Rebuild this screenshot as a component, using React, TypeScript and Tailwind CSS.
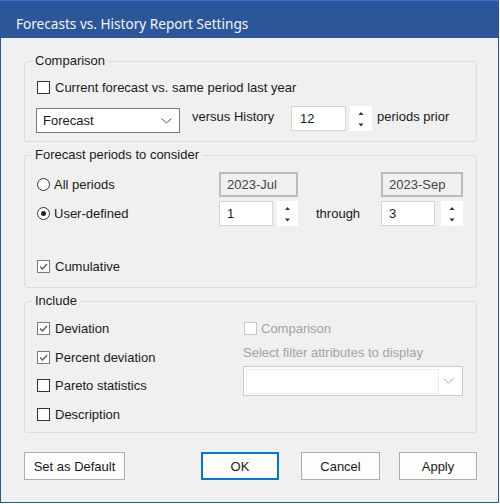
import React from "react";

function Check({ checked = false, disabled = false }: { checked?: boolean; disabled?: boolean }) {
  const cls = disabled
    ? "w-[13px] h-[13px] border border-[#c4c4c4] bg-white flex items-center justify-center shrink-0"
    : checked
    ? "w-[13px] h-[13px] border border-[#7a7a7a] bg-white flex items-center justify-center shrink-0"
    : "w-[13px] h-[13px] border border-[#333333] bg-white flex items-center justify-center shrink-0";
  return (
    <span className={cls}>
      {checked && (
        <svg width="11" height="11" viewBox="0 0 11 11">
          <path d="M2 5.5 L4.5 8 L9 3" stroke="#5a5a5a" strokeWidth="1.3" fill="none" />
        </svg>
      )}
    </span>
  );
}

function Radio({ selected = false }: { selected?: boolean }) {
  return (
    <span className="w-[13px] h-[13px] rounded-full border border-[#333333] bg-white flex items-center justify-center shrink-0">
      {selected && <span className="w-[5px] h-[5px] rounded-full bg-[#222222]" />}
    </span>
  );
}

function Spinner({ w }: { w: "w21" | "w22" }) {
  const cls = w === "w21" ? "w-[21px] h-[25px] bg-white shrink-0 block" : "w-[22px] h-[25px] bg-white shrink-0 block";
  const cx = w === "w21" ? 10.5 : 11;
  return (
    <span className={cls}>
      <svg width="100%" height="25" viewBox={`0 0 ${w === "w21" ? 21 : 22} 25`}>
        <path d={`M${cx - 2.5} 9 L${cx + 2.5} 9 L${cx} 6 Z`} fill="#333" />
        <path d={`M${cx - 2.5} 17.5 L${cx + 2.5} 17.5 L${cx} 20.5 Z`} fill="#333" />
      </svg>
    </span>
  );
}

function Chevron({ color }: { color: string }) {
  return (
    <svg width="11" height="6" viewBox="0 0 11 6">
      <path d="M0.5 0.5 L5.5 5 L10.5 0.5" stroke={color} strokeWidth="1" fill="none" />
    </svg>
  );
}

export default function App() {
  return (
    <div className="w-[500px] h-[504px] bg-white">
      <div className="w-[499px] h-[503px] flex flex-col font-['Liberation_Sans',Arial,sans-serif] text-[13px] leading-[15px] text-[#1a1a1a]">
        {/* Title bar */}
        <div className="h-[38px] shrink-0 bg-[#2b579a] border-t border-[#2f74d0] pl-[16px] pt-[14px]">
          <span className="font-['Noto_Sans',sans-serif] text-[13.6px] leading-[18px] text-[#f2f5fa]">
            Forecasts vs. History Report Settings
          </span>
        </div>

        {/* Body */}
        <div className="flex-1 bg-[#f0f0f0] border-x border-b border-[#2b579a] flex flex-col">
          {/* Comparison */}
          <fieldset className="mt-[15px] ml-[23px] w-[453px] border border-[#dcdcdc] rounded-[3px]">
            <legend className="ml-[7px] px-[3px] leading-[16px]">Comparison</legend>
            <div className="pl-[12px] pt-[10px] pb-[8px]">
              <div className="h-[16px] flex items-center gap-[5px]">
                <Check />
                <span>Current forecast vs. same period last year</span>
              </div>
              <div className="mt-[11px] h-[27px] flex items-start">
                <div className="mt-[2px] ml-[-1px] w-[144px] h-[25px] border border-[#7a7a7a] bg-white flex items-center justify-between pl-[6px] pr-[7px]">
                  <span>Forecast</span>
                  <Chevron color="#555555" />
                </div>
                <span className="ml-[12px] w-[99px] mt-[3px]">versus History</span>
                <div className="w-[55px] h-[25px] border border-[#d3d3d3] bg-white flex items-center pl-[8px]">12</div>
                <span className="ml-[4px]">
                  <Spinner w="w22" />
                </span>
                <span className="ml-[5px] mt-[3px]">periods prior</span>
              </div>
            </div>
          </fieldset>

          {/* Forecast periods */}
          <fieldset className="mt-[5px] ml-[23px] w-[453px] border border-[#dcdcdc] rounded-[3px]">
            <legend className="ml-[7px] px-[3px] leading-[16px]">Forecast periods to consider</legend>
            <div className="pl-[12px] pt-[9px] pb-[13px]">
              <div className="h-[25px] flex items-center">
                <div className="w-[182px] flex items-center gap-[4px]">
                  <Radio />
                  <span>All periods</span>
                </div>
                <div className="w-[79px] h-[25px] border-2 border-[#bcbcbc] bg-[#f0f0f0] flex items-center pl-[6px] text-[#444444]">
                  2023-Jul
                </div>
                <div className="w-[83px]" />
                <div className="w-[82px] h-[25px] border-2 border-[#bcbcbc] bg-[#f0f0f0] flex items-center pl-[6px] text-[#444444]">
                  2023-Sep
                </div>
              </div>
              <div className="mt-[4px] h-[25px] flex items-center">
                <div className="w-[182px] flex items-center gap-[4px]">
                  <Radio selected />
                  <span>User-defined</span>
                </div>
                <div className="w-[54px] h-[25px] border border-[#d3d3d3] bg-white flex items-center pl-[7px]">1</div>
                <span className="ml-[4px]">
                  <Spinner w="w21" />
                </span>
                <span className="ml-[18px] w-[65px]">through</span>
                <div className="w-[54px] h-[25px] border border-[#d3d3d3] bg-white flex items-center pl-[7px]">3</div>
                <span className="ml-[6px]">
                  <Spinner w="w22" />
                </span>
              </div>
              <div className="mt-[32px] h-[16px] flex items-center gap-[5px]">
                <Check checked />
                <span>Cumulative</span>
              </div>
            </div>
          </fieldset>

          {/* Include */}
          <fieldset className="mt-[5px] ml-[23px] w-[453px] border border-[#dcdcdc] rounded-[3px]">
            <legend className="ml-[7px] px-[3px] leading-[16px]">Include</legend>
            <div className="pl-[12px] pt-[11px] pb-[10px] flex items-start">
              <div className="w-[206px] flex flex-col">
                <div className="h-[16px] flex items-center gap-[5px]">
                  <Check checked />
                  <span>Deviation</span>
                </div>
                <div className="mt-[13px] h-[16px] flex items-center gap-[5px]">
                  <Check checked />
                  <span>Percent deviation</span>
                </div>
                <div className="mt-[12px] h-[16px] flex items-center gap-[5px]">
                  <Check />
                  <span>Pareto statistics</span>
                </div>
                <div className="mt-[13px] h-[16px] flex items-center gap-[5px]">
                  <Check />
                  <span>Description</span>
                </div>
              </div>
              <div className="w-[220px] flex flex-col">
                <div className="h-[16px] flex items-center gap-[4px] pl-[1px] text-[#a3a3a3]">
                  <Check disabled />
                  <span>Comparison</span>
                </div>
                <div className="mt-[8px] h-[16px] flex items-center text-[#a3a3a3]">
                  Select filter attributes to display
                </div>
                <div className="mt-[6px] w-[220px] h-[30px] border border-[#cccccc] bg-white flex items-center pl-[2px] pr-[5px]">
                  <div className="w-[193px] h-[25px] border border-[#ececec]" />
                  <div className="flex-1 flex justify-center">
                    <Chevron color="#a8a8a8" />
                  </div>
                </div>
              </div>
            </div>
          </fieldset>

          {/* Buttons */}
          <div className="mt-[19px] pl-[23px] flex items-center">
            <button className="w-[101px] h-[28px] border border-[#adadad] bg-[#fdfdfd]">Set as Default</button>
            <button className="ml-[76px] w-[78px] h-[28px] border-2 border-[#0078d7] bg-[#fdfdfd]">OK</button>
            <button className="ml-[22px] w-[79px] h-[28px] border border-[#adadad] bg-[#fdfdfd]">Cancel</button>
            <button className="ml-[19px] w-[78px] h-[28px] border border-[#adadad] bg-[#fdfdfd]">Apply</button>
          </div>
        </div>
      </div>
    </div>
  );
}
